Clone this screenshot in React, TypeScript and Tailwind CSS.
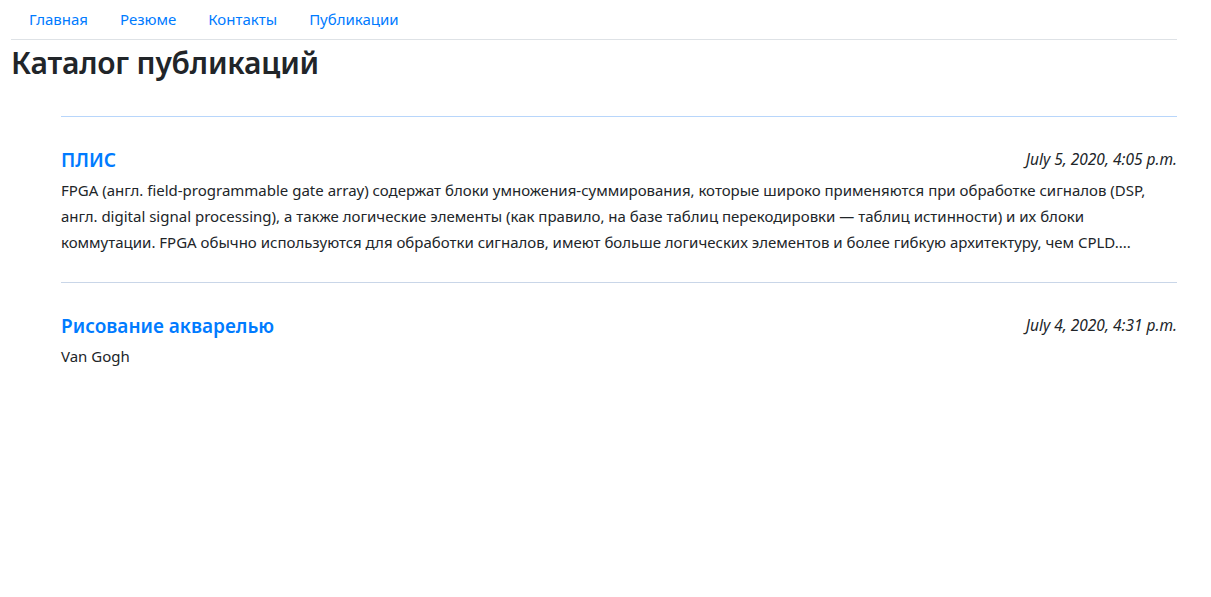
const posts = [
  {
    title: "ПЛИС",
    date: "July 5, 2020, 4:05 p.m.",
    text: "FPGA (англ. field-programmable gate array) содержат блоки умножения-суммирования, которые широко применяются при обработке сигналов (DSP, англ. digital signal processing), а также логические элементы (как правило, на базе таблиц перекодировки — таблиц истинности) и их блоки коммутации. FPGA обычно используются для обработки сигналов, имеют больше логических элементов и более гибкую архитектуру, чем CPLD....",
    line: "border-[#b8d6fb]",
  },
  {
    title: "Рисование акварелью",
    date: "July 4, 2020, 4:31 p.m.",
    text: "Van Gogh",
    line: "border-[#c9d6e8]",
  },
];

export default function App() {
  return (
    <div className="min-h-screen bg-white text-[#212529] [font-family:'Noto_Sans',sans-serif]">
      <div className="pl-[11px] pr-[34px]">
        <nav className="flex border-b border-[#dee2e6] pl-[2px]">
          {["Главная", "Резюме", "Контакты", "Публикации"].map((l) => (
            <a key={l} href="#" className="px-4 py-2 text-[15px] leading-[23px] text-[#007bff] [word-spacing:1px]">
              {l}
            </a>
          ))}
        </nav>
        <h1 className="mt-[3px] text-[30px] font-semibold leading-[40px] tracking-[-0.2px]">Каталог публикаций</h1>
        <div className="ml-[50px] mt-[33px]">
          {posts.map((p) => (
            <div key={p.title} className={`border-t ${p.line} pt-[29px] pb-[27px]`}>
              <div className="flex items-baseline justify-between">
                <a href="#" className="text-[19px] font-semibold leading-[28px] text-[#007bff]">
                  {p.title}
                </a>
                <span className="text-[15.5px] italic -translate-y-[2px]">{p.date}</span>
              </div>
              <p className="mt-[3px] text-[15px] leading-[26px]">{p.text}</p>
            </div>
          ))}
        </div>
      </div>
    </div>
  );
}
